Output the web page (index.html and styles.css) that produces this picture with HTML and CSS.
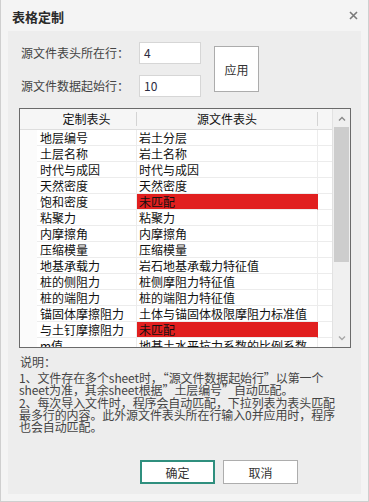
FILE: index.html
```html
<!DOCTYPE html>
<html lang="zh">
<head>
<meta charset="utf-8">
<title>表格定制</title>
<link rel="stylesheet" href="styles.css">
</head>
<body>
<div class="window">
  <div class="titlebar">
    <span class="title">表格定制</span>
    <svg class="close" width="9" height="9" viewBox="0 0 9 9"><path d="M1 1L8 8M8 1L1 8" stroke="#7a7a7a" stroke-width="1.6" fill="none"/></svg>
  </div>
  <div class="panel">
    <div class="form">
      <div class="fields">
        <div class="field"><span class="label">源文件表头所在行：</span><div class="input">4</div></div>
        <div class="field"><span class="label">源文件数据起始行：</span><div class="input">10</div></div>
      </div>
      <div class="apply">应用</div>
    </div>

    <div class="grid">
      <div class="gridmain">
        <div class="hrow">
          <div class="hcorner"></div>
          <div class="hc1">定制表头</div>
          <div class="hsep"></div>
          <div class="hc2">源文件表头</div>
          <div class="hsep"></div>
          <div class="hrest"></div>
        </div>
        <div class="row"><div class="strip"></div><div class="c1">地层编号</div><div class="c2">岩土分层</div><div class="rest"></div></div>
        <div class="row"><div class="strip"></div><div class="c1">土层名称</div><div class="c2">岩土名称</div><div class="rest"></div></div>
        <div class="row"><div class="strip"></div><div class="c1">时代与成因</div><div class="c2">时代与成因</div><div class="rest"></div></div>
        <div class="row"><div class="strip"></div><div class="c1">天然密度</div><div class="c2">天然密度</div><div class="rest"></div></div>
        <div class="row"><div class="strip"></div><div class="c1">饱和密度</div><div class="c2 miss">未匹配</div><div class="rest"></div></div>
        <div class="row"><div class="strip"></div><div class="c1">粘聚力</div><div class="c2">粘聚力</div><div class="rest"></div></div>
        <div class="row"><div class="strip"></div><div class="c1">内摩擦角</div><div class="c2">内摩擦角</div><div class="rest"></div></div>
        <div class="row"><div class="strip"></div><div class="c1">压缩模量</div><div class="c2">压缩模量</div><div class="rest"></div></div>
        <div class="row"><div class="strip"></div><div class="c1">地基承载力</div><div class="c2">岩石地基承载力特征值</div><div class="rest"></div></div>
        <div class="row"><div class="strip"></div><div class="c1">桩的侧阻力</div><div class="c2">桩侧摩阻力特征值</div><div class="rest"></div></div>
        <div class="row"><div class="strip"></div><div class="c1">桩的端阻力</div><div class="c2">桩的端阻力特征值</div><div class="rest"></div></div>
        <div class="row"><div class="strip"></div><div class="c1">锚固体摩擦阻力</div><div class="c2">土体与锚固体极限摩阻力标准值</div><div class="rest"></div></div>
        <div class="row"><div class="strip"></div><div class="c1">与土钉摩擦阻力</div><div class="c2 miss">未匹配</div><div class="rest"></div></div>
        <div class="row"><div class="strip"></div><div class="c1">m值</div><div class="c2">地基土水平抗力系数的比例系数</div><div class="rest"></div></div>
      </div>
      <div class="vscroll">
        <div class="sbtn"><svg width="8" height="5" viewBox="0 0 8 5"><path d="M1 4.5L4 1.5L7 4.5" stroke="#8a8a8a" stroke-width="1.4" fill="none"/></svg></div>
        <div class="thumb"></div>
        <div class="track"></div>
        <div class="sbtn"><svg width="8" height="5" viewBox="0 0 8 5"><path d="M1 0.5L4 3.5L7 0.5" stroke="#a8a8a8" stroke-width="1.4" fill="none"/></svg></div>
      </div>
    </div>

    <div class="notes">
      <div class="notes-title">说明：</div>
      <div class="notes-body">1、文件存在多个sheet时，“源文件数据起始行”以第一个<br>sheet为准，其余sheet根据”土层编号”自动匹配。<br>2、每次导入文件时，程序会自动匹配，下拉列表为表头匹配<br>最多行的内容。此外源文件表头所在行输入0并应用时，程序<br>也会自动匹配。</div>
    </div>

    <div class="actions">
      <div class="btn primary">确定</div>
      <div class="btn">取消</div>
    </div>
  </div>
</div>
</body>
</html>
```

FILE: styles.css
```css
html, body {
  margin: 0;
  padding: 0;
  background: #f3f3f3;
}
body {
  font-family: "Noto Sans CJK SC", "Noto Sans", sans-serif;
  font-size: 12px;
  color: #333;
}
.window {
  width: 369px;
  height: 502px;
  box-sizing: border-box;
  border: 1px solid #cfcfcf;
  border-top: none;
  background: #f4f4f4;
  display: flex;
  flex-direction: column;
}
.titlebar {
  height: 31px;
  flex: none;
  display: flex;
  align-items: center;
  justify-content: space-between;
  padding: 0 10px 0 11px;
}
.title {
  font-weight: bold;
  font-size: 13px;
  line-height: 14px;
  color: #2a2a2a;
  margin-top: 3px;
}
.close {
  display: block;
  margin-top: 0;
}
.panel {
  width: 353px;
  height: 463px;
  margin-left: 7px;
  background: #ededed;
  display: flex;
  flex-direction: column;
}
.form {
  display: flex;
  align-items: center;
  padding: 11px 0 0 13px;
}
.fields {
  display: flex;
  flex-direction: column;
  gap: 11px;
}
.field {
  display: flex;
  align-items: center;
  height: 22px;
}
.label {
  width: 118px;
  line-height: 14px;
  color: #444;
}
.input {
  width: 62px;
  height: 22px;
  box-sizing: border-box;
  border: 1px solid #d6d6d6;
  background: #fff;
  padding-left: 4px;
  line-height: 20px;
  color: #2b2b40;
}
.apply {
  margin-left: 13px;
  width: 45px;
  height: 46px;
  box-sizing: border-box;
  border: 1px solid #acacac;
  background: #fff;
  display: flex;
  align-items: center;
  justify-content: center;
  color: #333;
  margin-top: -1px;
}
.grid {
  margin: 11px 0 0 11px;
  width: 332px;
  height: 240px;
  box-sizing: border-box;
  border: 1px solid #6a6a6a;
  background: #fff;
  display: flex;
  flex: none;
}
.gridmain {
  width: 312px;
  overflow: hidden;
  display: flex;
  flex-direction: column;
}
.hrow {
  flex: none;
  height: 21px;
  box-sizing: border-box;
  border-bottom: 1px solid #dedede;
  background: #f6f6f6;
  display: flex;
  align-items: center;
  color: #111;
  line-height: 14px;
}
.hcorner { width: 17px; }
.hc1 { width: 99px; text-align: center; }
.hc2 { width: 180px; text-align: center; }
.hsep {
  width: 1px;
  height: 14px;
  background: #d4d4d4;
}
.hrest { flex: 1; }
.row {
  flex: none;
  height: 16px;
  display: flex;
  line-height: 15px;
  color: #111;
}
.strip {
  width: 17px;
  background: #fbfbfb;
}
.c1, .c2, .rest {
  box-sizing: border-box;
  border-bottom: 1px solid #ececec;
  white-space: nowrap;
  overflow: hidden;
}
.c1 {
  width: 100px;
  border-right: 1px solid #ececec;
  padding-left: 3px;
}
.c2 {
  width: 181px;
  border-right: 1px solid #ececec;
  padding-left: 2px;
}
.c2.miss {
  background: #e11f1f;
  border-right-color: #e11f1f;
}
.rest { flex: 1; }
.vscroll {
  width: 17px;
  border-left: 1px solid #e2e2e2;
  background: #f0f0f0;
  display: flex;
  flex-direction: column;
}
.sbtn {
  height: 18px;
  flex: none;
  display: flex;
  align-items: center;
  justify-content: center;
}
.thumb {
  height: 135px;
  margin: 0 1px;
  background: #cdcdcd;
  flex: none;
}
.track { flex: 1; }
.notes {
  padding-left: 11px;
  margin-top: 8px;
  color: #444;
}
.notes-title {
  line-height: 12px;
  padding-left: 1px;
  margin-bottom: 4px;
}
.notes-body {
  line-height: 12.25px;
  font-size: 12px;
  letter-spacing: -0.1px;
}
.actions {
  margin-top: auto;
  margin-bottom: 10px;
  padding-left: 132px;
  display: flex;
  gap: 8px;
}
.btn {
  width: 75px;
  height: 24px;
  box-sizing: border-box;
  border: 1px solid #adadad;
  background: #fff;
  display: flex;
  align-items: center;
  justify-content: center;
  color: #333;
  font-size: 12px;
}
.btn.primary {
  border: 2px solid #2f8f7e;
}
```
